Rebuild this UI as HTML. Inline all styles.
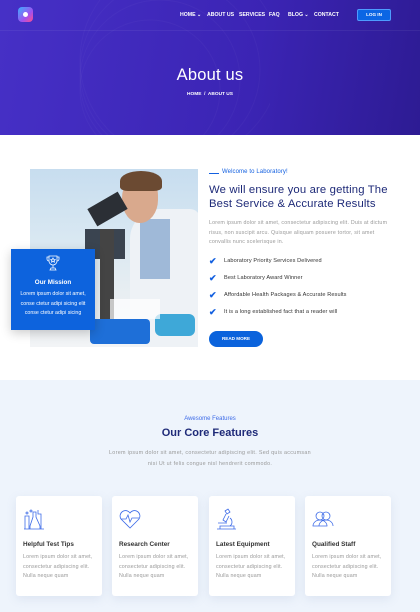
<!DOCTYPE html><html><head><style>
*{margin:0;padding:0;box-sizing:border-box}
body{width:420px;height:612px;overflow:hidden;font-family:"Liberation Sans",sans-serif;background:#fff;position:relative}
.a{position:absolute}
.hero{left:0;top:0;width:420px;height:135px;background:linear-gradient(100deg,#4630c6 0%,#3b24b4 60%,#2d1b93 100%);overflow:hidden}
.nav{font-size:5.2px;color:#fff;font-weight:bold;top:12px;white-space:nowrap}
.sec2{left:0;top:380px;width:420px;height:232px;background:#eef4fc}
.card{background:#fff;border-radius:3px;box-shadow:0 3px 10px rgba(120,140,180,.15);top:496px;width:86px;height:100px}
.card h4{position:absolute;left:7px;top:45px;font-size:6.4px;color:#333;font-weight:bold}
.card p{position:absolute;left:7px;top:57px;font-size:5.3px;color:#999;line-height:9.6px;width:78px;letter-spacing:.15px}
.chk{left:209px;font-size:5.6px;color:#333;letter-spacing:.1px}
.chk b{position:absolute;left:0;top:-2px;color:#1360e0;font-size:9px}
.chk span{position:absolute;left:15px;white-space:nowrap}
</style></head><body>
<div class="a hero">
<svg class="a" style="left:50px;top:-40px" width="220" height="200"><g fill="none" stroke="rgba(255,255,255,.03)" stroke-width="1"><circle cx="110" cy="120" r="80"/><circle cx="120" cy="110" r="90"/><circle cx="100" cy="130" r="70"/><circle cx="130" cy="100" r="100"/></g></svg>
<div class="a" style="left:0;top:30px;width:420px;height:1px;background:rgba(255,255,255,.06)"></div>
<div class="a" style="left:18px;top:7px;width:15px;height:15px;border-radius:4px;background:linear-gradient(135deg,#3ab0ff,#a050f0 60%,#ff4d8a)"><div class="a" style="left:5px;top:5px;width:5px;height:5px;border-radius:50%;background:#fff"></div></div>
<div class="a nav" style="left:180px">HOME ⌄</div>
<div class="a nav" style="left:207px">ABOUT US</div>
<div class="a nav" style="left:239px">SERVICES</div>
<div class="a nav" style="left:269px">FAQ</div>
<div class="a nav" style="left:288px">BLOG ⌄</div>
<div class="a nav" style="left:314px">CONTACT</div>
<div class="a" style="left:357px;top:9px;width:34px;height:12px;background:#0b66e4;border:1px solid #4e9cff;border-radius:2px;color:#fff;font-size:4.6px;font-weight:bold;text-align:center;line-height:10px">LOG IN</div>
<div class="a" style="left:0;width:420px;top:66px;text-align:center;color:#fff;font-size:16.5px;letter-spacing:.2px">About us</div>
<div class="a" style="left:0;width:420px;top:92px;text-align:center;color:#fff;font-size:4.8px;font-weight:bold">HOME &nbsp;/&nbsp; ABOUT US</div>
</div>
<div class="a" style="left:30px;top:169px;width:168px;height:178px;overflow:hidden;background:linear-gradient(180deg,#c7ddef 0%,#d9e8f2 40%,#e8eef2 70%,#f2f4f6 100%)">
<div class="a" style="left:55px;top:60px;width:40px;height:30px;background:#3a4450"></div>
<div class="a" style="left:100px;top:40px;width:70px;height:140px;background:#eef2f6;border-radius:30px 10px 0 0"></div>
<div class="a" style="left:110px;top:50px;width:30px;height:60px;background:#9fb9d8"></div>
<div class="a" style="left:92px;top:8px;width:36px;height:46px;background:#d9a98d;border-radius:45% 40% 50% 50%"></div>
<div class="a" style="left:90px;top:2px;width:42px;height:20px;background:#6b4a32;border-radius:50% 50% 20% 20%"></div>
<div class="a" style="left:60px;top:30px;width:35px;height:20px;background:#2b2f35;transform:rotate(-30deg)"></div>
<div class="a" style="left:70px;top:60px;width:14px;height:90px;background:#444"></div>
<div class="a" style="left:125px;top:145px;width:40px;height:22px;background:#3ea8d8;border-radius:6px"></div>
<div class="a" style="left:60px;top:150px;width:60px;height:25px;background:#1e6fd8;border-radius:4px"></div>
<div class="a" style="left:80px;top:130px;width:50px;height:20px;background:rgba(255,255,255,.7)"></div>
</div>
<div class="a" style="left:11px;top:249px;width:84px;height:81px;background:#0d63dd;box-shadow:0 3px 10px rgba(0,0,0,.2);color:#fff;text-align:center">
<svg class="a" style="left:35px;top:6px" width="14" height="16" viewBox="0 0 14 16" fill="none" stroke="#fff" stroke-width=".8"><path d="M3 1h8v5a4 4 0 0 1-8 0z M3 2H1v2a2 2 0 0 0 2 2 M11 2h2v2a2 2 0 0 1-2 2 M7 10v3 M4 15h6l-1-2H5z"/><path d="M7 3l.7 1.4 1.5.2-1.1 1 .3 1.5L7 6.4l-1.4.7.3-1.5-1.1-1 1.5-.2z"/></svg>
<div class="a" style="left:0;width:84px;top:30px;font-size:6.3px;font-weight:bold">Our Mission</div>
<div class="a" style="left:0;width:84px;top:41px;font-size:5.3px;line-height:9.6px">Lorem ipsum dolor sit amet,<br>conse ctetur adipi sicing elit<br>conse ctetur adipi sicing</div>
</div>
<div class="a" style="left:209px;top:173px;width:10px;height:1px;background:#1360e0"></div>
<div class="a" style="left:222px;top:169px;font-size:6px;color:#1360e0;letter-spacing:.1px">Welcome to Laboratory!</div>
<div class="a" style="left:209px;top:183px;font-size:11.3px;color:#1e2a78;line-height:14px;width:182px;letter-spacing:.15px">We will ensure you are getting The Best Service &amp; Accurate Results</div>
<div class="a" style="left:209px;top:219px;font-size:5.3px;color:#999;line-height:9.6px;width:182px;letter-spacing:.2px">Lorem ipsum dolor sit amet, consectetur adipiscing elit. Duis at dictum risus, non suscipit arcu. Quisque aliquam posuere tortor, sit amet convallis nunc scelerisque in.</div>
<div class="a chk" style="top:258px"><b>✔</b><span>Laboratory Priority Services Delivered</span></div>
<div class="a chk" style="top:275px"><b>✔</b><span>Best Laboratory Award Winner</span></div>
<div class="a chk" style="top:292px"><b>✔</b><span>Affordable Health Packages &amp; Accurate Results</span></div>
<div class="a chk" style="top:309px"><b>✔</b><span>It is a long established fact that a reader will</span></div>
<div class="a" style="left:209px;top:331px;width:54px;height:16px;border-radius:8px;background:#0b63dc;color:#fff;font-size:4.6px;font-weight:bold;text-align:center;line-height:16px">READ MORE</div>
<div class="a sec2"></div>
<div class="a" style="left:0;width:420px;top:416px;text-align:center;font-size:6px;color:#3d6be8">Awesome Features</div>
<div class="a" style="left:0;width:420px;top:427px;text-align:center;font-size:11px;color:#1e2a78;font-weight:bold">Our Core Features</div>
<div class="a" style="left:0;width:420px;top:448px;text-align:center;font-size:5.4px;color:#999;line-height:10.5px;letter-spacing:.3px">Lorem ipsum dolor sit amet, consectetur adipiscing elit. Sed quis accumsan<br>nisi Ut ut felis congue nisl hendrerit commodo.</div>
<div class="a card" style="left:16px"><svg class="a" style="left:6px;top:12px" width="24" height="22" fill="none" stroke="#3d6be8" stroke-width=".8"><path d="M2 21h20M3 8h4v13H3zM11 4h3v5l4 9v3H8v-3l3-9z M16 2v4h3v15"/><circle cx="9" cy="3" r="1"/><circle cx="5" cy="5" r="1"/></svg><h4>Helpful Test Tips</h4><p>Lorem ipsum dolor sit amet,<br>consectetur adipiscing elit.<br>Nulla neque quam</p></div>
<div class="a card" style="left:112px"><svg class="a" style="left:6px;top:13px" width="24" height="20" fill="none" stroke="#3d6be8" stroke-width=".8"><path d="M12 19L3 10a5 5 0 0 1 9-6 5 5 0 0 1 9 6z M3 10h5l2-4 2 7 2-4h7"/></svg><h4>Research Center</h4><p>Lorem ipsum dolor sit amet,<br>consectetur adipiscing elit.<br>Nulla neque quam</p></div>
<div class="a card" style="left:209px"><svg class="a" style="left:6px;top:12px" width="22" height="22" fill="none" stroke="#3d6be8" stroke-width=".8"><path d="M2 21h19M5 18h14v3H5zM10 3l3-2 2 3-3 2zM11 6l-3 6 3 2 3-6M15 10a5 5 0 0 1 0 8M3 15h9"/></svg><h4>Latest Equipment</h4><p>Lorem ipsum dolor sit amet,<br>consectetur adipiscing elit.<br>Nulla neque quam</p></div>
<div class="a card" style="left:305px"><svg class="a" style="left:7px;top:14px" width="22" height="18" fill="none" stroke="#3d6be8" stroke-width=".8"><circle cx="8" cy="6" r="4"/><circle cx="14" cy="6" r="4"/><path d="M1 16a7 6 0 0 1 14 0zM7 16a7 6 0 0 1 14 0"/></svg><h4>Qualified Staff</h4><p>Lorem ipsum dolor sit amet,<br>consectetur adipiscing elit.<br>Nulla neque quam</p></div>
</body></html>
